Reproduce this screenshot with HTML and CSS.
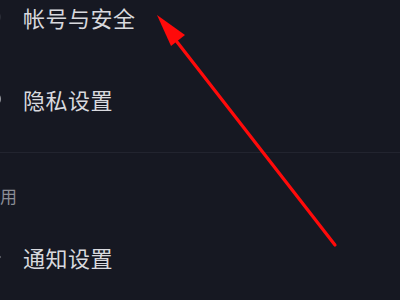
FILE: index.html
```html
<html lang="zh-CN">
<head>
    <meta charset="UTF-8">
    <meta name="viewport" content="width=device-width, initial-scale=1.0">
    <title>设置</title>
    <link rel="stylesheet" href="styles.css">
</head>
<body>
    <div class="settings">
        <div class="group">
            <div class="row">
                <span class="row-icon">
                    <svg width="20" height="20" viewBox="0 0 20 20"><circle cx="12" cy="10" r="7" fill="none" stroke="#30323c" stroke-width="1.6"/></svg>
                </span>
                <span class="row-text">帐号与安全</span>
            </div>
            <div class="row">
                <span class="row-icon">
                    <svg width="20" height="20" viewBox="0 0 20 20"><circle cx="12" cy="10" r="7" fill="none" stroke="#a4a6ac" stroke-width="1.8"/></svg>
                </span>
                <span class="row-text">隐私设置</span>
            </div>
        </div>

        <div class="divider"></div>

        <div class="section-title">通用</div>

        <div class="group">
            <div class="row">
                <span class="row-icon">
                    <svg width="20" height="20" viewBox="0 0 20 20"><circle cx="18" cy="10" r="1.5" fill="#b4b6bc"/></svg>
                </span>
                <span class="row-text">通知设置</span>
            </div>
        </div>
    </div>

    <!-- annotation arrow -->
    <svg class="annotation" width="400" height="300" viewBox="0 0 400 300">
        <line x1="174" y1="38" x2="335" y2="245" stroke="#ff0a0a" stroke-width="3.2" stroke-linecap="round"/>
        <polygon points="157,15 185,35 171,46" fill="#ff0a0a"/>
    </svg>
</body>
</html>
```

FILE: styles.css
```css
body {
    margin: 0;
    width: 400px;
    height: 300px;
    overflow: hidden;
    background-color: #161822;
    font-family: "Noto Sans CJK SC", "Noto Sans", sans-serif;
    position: relative;
}

.settings {
    display: flex;
    flex-direction: column;
    margin-top: -2px;
}

.group {
    display: flex;
    flex-direction: column;
    gap: 44px;
}

.row {
    display: flex;
    align-items: center;
    height: 38px;
    gap: 22px;
}

.row-icon {
    display: flex;
    width: 20px;
    height: 20px;
    margin-left: -19px;
}

.row-text {
    font-size: 22px;
    color: #d8d9de;
    letter-spacing: 0.5px;
}

.divider {
    height: 1px;
    background-color: #22242f;
    margin-top: 34px;
}

.section-title {
    height: 24px;
    line-height: 24px;
    margin-top: 31px;
    margin-left: -18px;
    font-size: 17px;
    color: #8c8e96;
    letter-spacing: 1px;
}

.section-title + .group {
    margin-top: 30px;
}

.annotation {
    position: absolute;
    left: 0;
    top: 0;
}
```
